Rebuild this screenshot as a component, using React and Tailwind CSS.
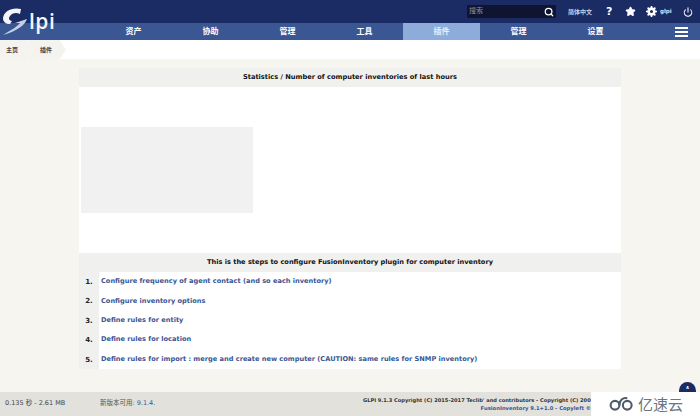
import { Search, Star, Power } from "lucide-react";

const navItems = ["资产", "协助", "管理", "工具", "插件", "管理", "设置"];

const steps = [
  "Configure frequency of agent contact (and so each inventory)",
  "Configure inventory options",
  "Define rules for entity",
  "Define rules for location",
  "Define rules for import : merge and create new computer (CAUTION: same rules for SNMP inventory)",
];

const sans = "font-['DejaVu_Sans','Noto_Sans_CJK_SC',sans-serif]";

const Logo = () => (
  <div className="absolute left-[2px] top-[8px] flex items-start">
    <svg width="28" height="28" viewBox="0 0 28 28">
      <path d="M19 1 C10 -1 2 3 1 10 C1 14 4 16 8 16 L10 13 C7 13 6 10 8 8 C10 5 14 4 18 6 Z" fill="#f4f5f8" />
      <path d="M25 11 C23 17 15 23 1 27 C9 22 15 19 18 15 L13 15 Z" fill="#c5cfe6" />
    </svg>
    <span className="-ml-[1px] mt-[-1px] font-['Open_Sans',sans-serif] text-[21px] leading-[28px] font-semibold tracking-[0.5px] text-[#f4f5f8]">lpi</span>
  </div>
);

const Gear = () => (
  <svg width="11" height="11" viewBox="0 0 11 11" className="mr-[3px]">
    <circle cx="5.5" cy="5.5" r="3" fill="none" stroke="white" strokeWidth="2.4" />
    <path d="M5.5 0v11M0 5.5h11M1.6 1.6l7.8 7.8M9.4 1.6l-7.8 7.8" stroke="white" strokeWidth="1.6" />
    <circle cx="5.5" cy="5.5" r="1.5" fill="#1a2c63" />
  </svg>
);

const App = () => {
  return (
    <div className={`relative flex h-[416px] w-[700px] flex-col overflow-hidden bg-[#f6f5f0] ${sans}`}>
      {/* Top bar */}
      <div className="flex h-[23px] items-center bg-[#1a2c63] pl-[467px] text-white">
        <div className="flex h-[13px] w-[89px] items-center justify-between rounded-[1px] bg-[#0f1430] pl-[2px] pr-[2px]">
          <span className="text-[7px] leading-none text-[#8d8d95]">搜索</span>
          <Search size={10} strokeWidth={3} />
        </div>
        <span className="ml-[12px] w-[26px] text-[6px] font-bold whitespace-nowrap text-[#c9d2e8]">简体中文</span>
        <span className="ml-[12px] w-[8px] text-[11px] leading-none font-bold">?</span>
        <Star size={11} fill="white" className="ml-[11px]" />
        <div className="ml-[10px] flex items-center">
          <Gear />
          <span className="text-[5.5px] font-bold text-[#dfe5f2]">glpi</span>
        </div>
        <Power size={10} strokeWidth={2.5} className="ml-[11px]" />
      </div>

      {/* Menu */}
      <div className="flex h-[17px] bg-[#3a5693] pl-[95px]">
        {navItems.map((item, i) => (
          <div
            key={i}
            className={`flex w-[77px] items-center justify-center text-[8px] font-bold ${
              i === 4 ? "bg-[#8dacd9] text-[#e8eef8]" : "text-white"
            }`}
          >
            {item}
          </div>
        ))}
        <div className="ml-auto mr-[12px] flex flex-col justify-center gap-[2px]">
          <div className="h-[2px] w-[13px] bg-white" />
          <div className="h-[2px] w-[13px] bg-white" />
          <div className="h-[2px] w-[13px] bg-white" />
        </div>
      </div>

      {/* Breadcrumb */}
      <div className="flex h-[19px] items-center bg-white text-[6px] font-bold text-[#444]">
        <div className="flex h-[19px] w-[33px] items-center bg-[#f4f3ef] pl-[6px] [clip-path:polygon(0_0,80%_0,100%_50%,80%_100%,0_100%)]">主页</div>
        <div className="-ml-[6px] flex h-[19px] w-[39px] items-center bg-[#f4f3ef] pl-[13px] [clip-path:polygon(0_0,84%_0,100%_50%,84%_100%,0_100%,15%_50%)]">插件</div>
      </div>

      {/* Content */}
      <div className="min-h-0 flex-1 px-[79px] pt-[9px]">
        <div className="w-[542px] bg-white">
          <div className="flex h-[19px] items-center justify-center bg-[#f0f0ee] pt-[1px] text-[6.65px] font-bold text-[#111]">
            Statistics / Number of computer inventories of last hours
          </div>
          <div className="h-[166px] pl-[2px] pt-[40px]">
            <div className="h-[86px] w-[172px] bg-[#f1f1f1]" />
          </div>
          <div className="flex h-[19px] items-center justify-center bg-[#f0f0ee] pt-[1px] text-[6.62px] font-bold text-[#111]">
            This is the steps to configure FusionInventory plugin for computer inventory
          </div>
          {steps.map((step, i) => (
            <div key={i} className="flex h-[19.4px]">
              <div className="flex w-[20px] items-center justify-center bg-[#f0f0ee] pt-[1px] text-[7px] font-bold text-[#222]">{i + 1}.</div>
              <div className="flex flex-1 items-center pl-[2px] pt-[1px] text-[6.62px] font-bold text-[#3a5693]">{step}</div>
            </div>
          ))}
        </div>
      </div>

      {/* Back to top, the footer covers its lower half */}
      <div className="absolute left-[679px] top-[382px] flex h-[18px] w-[17px] justify-center rounded-full bg-[#1a2c63] pt-[2px] text-[5px] font-bold text-white">
        ∧
      </div>

      {/* Footer */}
      <div className="relative flex h-[24px] bg-[#e2e1dc]">
        <div className="flex w-[100px] items-center pl-[5px] text-[6.5px] text-[#444]">0.135 秒 - 2.61 MB</div>
        <div className="flex items-center text-[6.5px] text-[#555]">
          新版本可用: <span className="ml-[2px] text-[#3a5693]">9.1.4.</span>
        </div>
        <div className="ml-auto flex w-[228px] flex-col items-start overflow-hidden whitespace-nowrap pt-[4px] text-[5.25px] leading-[8px] font-bold text-[#333]">
          <span className="text-[5.1px]">GLPI 9.1.3 Copyright (C) 2015-2017 Teclib' and contributors - Copyright (C) 2003</span>
          <span className="self-end text-[#3a5693]">FusionInventory 9.1+1.0 - Copyleft ©</span>
        </div>
        <div className="flex w-[109px] items-start justify-center gap-[2px] bg-white pt-[3px]">
          <svg width="28" height="17" viewBox="0 0 32 18" fill="none" stroke="#4d5a68" strokeWidth="2.4">
            <circle cx="8" cy="11" r="5" />
            <circle cx="22" cy="11" r="5" />
            <path d="M13 11 C13 5 17 2 22 3" />
          </svg>
          <span className="font-['Noto_Sans_CJK_SC',sans-serif] text-[15px] leading-[17px] text-[#6b7580]">亿速云</span>
        </div>
      </div>

      <Logo />
    </div>
  );
};

export default App;
